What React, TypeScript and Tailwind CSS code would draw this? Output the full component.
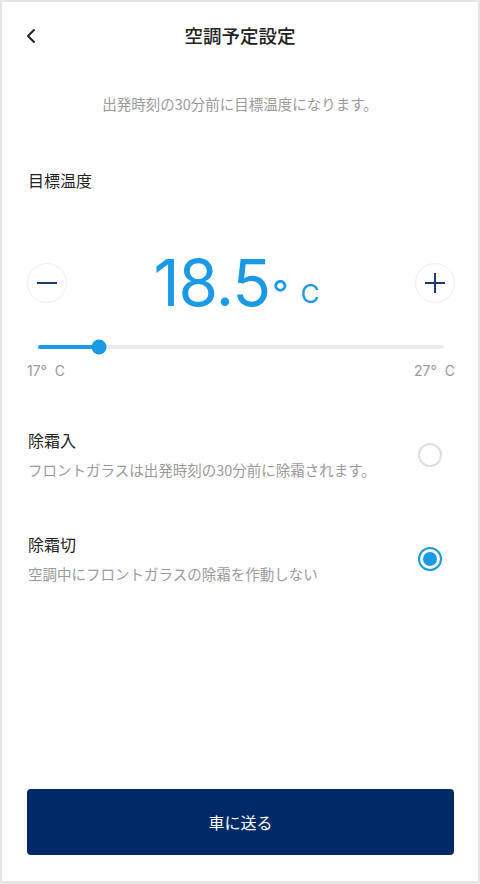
import { ChevronLeft } from "lucide-react";

const jp = "font-['Noto_Sans_CJK_JP','Noto_Sans',sans-serif]";

function Radio({ checked }: { checked: boolean }) {
  return checked ? (
    <span className="flex h-[24px] w-[24px] shrink-0 items-center justify-center rounded-full border-2 border-[#1a9ae6]">
      <span className="block h-[14px] w-[14px] rounded-full bg-[#1a9ae6]" />
    </span>
  ) : (
    <span className="block h-[24px] w-[24px] shrink-0 rounded-full border-2 border-[#dedede]" />
  );
}

function Option({
  title,
  desc,
  checked,
  className = "",
}: {
  title: string;
  desc: string;
  checked: boolean;
  className?: string;
}) {
  return (
    <div className={`flex items-center justify-between pl-[1px] ${className}`}>
      <div>
        <div className="text-[16px] leading-[22px] text-[#222]">{title}</div>
        <div className="mt-[9px] text-[14.5px] leading-[20px] text-[#9a9a9a]">{desc}</div>
      </div>
      <div className="mr-[13px]">
        <Radio checked={checked} />
      </div>
    </div>
  );
}

function StepButton({ plus }: { plus?: boolean }) {
  return (
    <button className="flex h-10 w-10 items-center justify-center rounded-full border border-[#efefef]">
      <svg width="20" height="20" viewBox="0 0 20 20" fill="none" stroke="#1c3a6b" strokeWidth="2">
        <line x1="0" y1="10" x2="20" y2="10" />
        {plus && <line x1="10" y1="0" x2="10" y2="20" />}
      </svg>
    </button>
  );
}

export default function App() {
  const min = 17;
  const max = 27;
  const value = 18.5;
  const pct = ((value - min) / (max - min)) * 100;

  return (
    <div
      className={`flex h-[884px] w-[480px] flex-col border-x-2 border-t-2 border-b-[3px] border-[#e6e6e6] bg-white ${jp}`}
    >
      {/* header */}
      <div className="relative mt-[10px] flex h-12 items-center justify-center">
        <ChevronLeft className="absolute left-[17px] h-6 w-6 text-[#222]" strokeWidth={2} />
        <h1 className="text-[18.5px] font-medium text-[#222]">空調予定設定</h1>
      </div>

      <p className="mt-[34px] text-center text-[14.5px] leading-[20px] text-[#9a9a9a]">
        出発時刻の30分前に目標温度になります。
      </p>

      <div className="flex flex-1 flex-col pl-[25px] pr-[23px]">
        <div className="mt-[55px] pl-[1px] text-[16px] leading-[22px] text-[#222]">目標温度</div>

        {/* temperature */}
        <div className="mt-[60px] flex h-[64px] items-center justify-between">
          <StepButton />
          <div className="mr-[8px] flex items-baseline font-['Inter',sans-serif] text-[#1a9ae6]">
            <span className="text-[64px] leading-none tracking-[-1px]">18.5</span>
            <span className="ml-[2px] text-[36px] leading-none">°</span>
            <span className="relative -top-[3px] ml-[12px] text-[26px] leading-none tracking-[1px]">C</span>
          </div>
          <StepButton plus />
        </div>

        {/* slider */}
        <div className="mt-[24px] flex h-4 items-center px-[11px]">
          <div className="relative h-[4px] flex-1 rounded-full bg-[#ebebeb]">
            <div className="h-full rounded-full bg-[#1a9ae6]" style={{ width: `${pct}%` }} />
            <div
              className="absolute top-1/2 h-[15px] w-[15px] -translate-x-1/2 -translate-y-1/2 rounded-full bg-[#1a9ae6]"
              style={{ left: `${pct}%` }}
            />
          </div>
        </div>
        <div className="mt-[7px] flex justify-between font-['Inter',sans-serif] text-[14px] leading-[18px] text-[#9a9a9a]">
          <span>17°&nbsp; C</span>
          <span>27°&nbsp; C</span>
        </div>

        <Option
          className="mt-[49px]"
          title="除霜入"
          desc="フロントガラスは出発時刻の30分前に除霜されます。"
          checked={false}
        />
        <Option
          className="mt-[53px]"
          title="除霜切"
          desc="空調中にフロントガラスの除霜を作動しない"
          checked
        />

        <button className="mb-[26px] mt-auto h-[66px] w-[427px] rounded-[4px] bg-[#002a66] text-[16px] text-white">
          車に送る
        </button>
      </div>
    </div>
  );
}
